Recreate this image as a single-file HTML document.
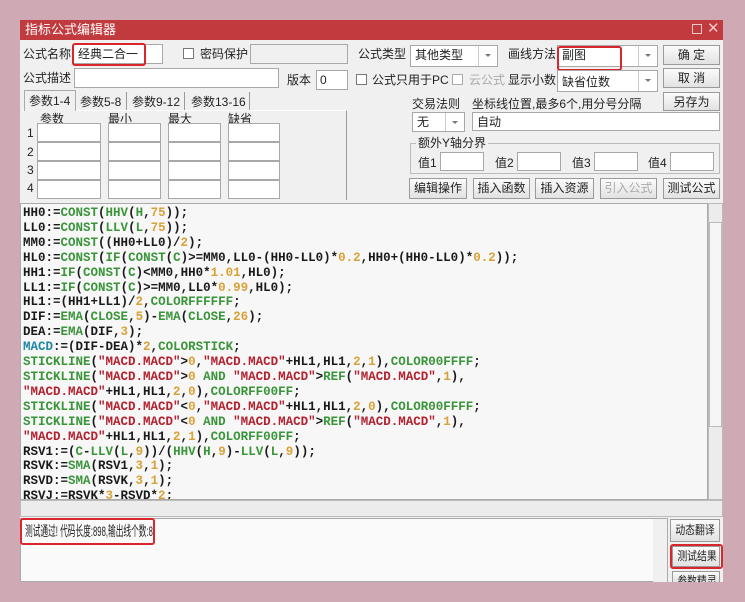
<!DOCTYPE html>
<html><head><meta charset="utf-8">
<style>
*{margin:0;padding:0;box-sizing:border-box}
body{width:745px;height:602px;background:#cfaab4;position:relative;overflow:hidden;font-family:"Liberation Sans","Noto Sans CJK SC",sans-serif;font-size:12px;color:#222}
.a{position:absolute}
.win{left:20px;top:20px;width:703px;height:562px;background:#f0f0f0}
.title{left:20px;top:20px;width:703px;height:20px;background:#c13a3d;color:#fff;font-size:13px;line-height:20px;padding-left:5px}
.l{position:absolute;white-space:nowrap;font-size:12px;line-height:14px}
.in{position:absolute;background:#fff;border:1px solid #a8a8a8}
.sel{position:absolute;background:#fff;border:1px solid #a8a8a8;font-size:12px;line-height:18px;padding-left:4px}
.sel:after{content:"";position:absolute;right:0;top:0;bottom:0;width:18px;border-left:1px solid #ccc;background:linear-gradient(#fff,#fff)}
.sel i{position:absolute;right:6px;top:8px;border:3px solid transparent;border-top:3px solid #777;z-index:2}
.btn{position:absolute;background:linear-gradient(#fbfbfb,#e2e2e2);border:1px solid #9a9a9a;font-size:12px;text-align:center;line-height:18px;white-space:nowrap;overflow:hidden}
.red{position:absolute;border:2px solid #d8262c;border-radius:3px}
.cb{position:absolute;width:11px;height:11px;border:1px solid #777;background:#fff}
.code{left:20px;top:203px;width:688px;height:297px;background:#f7f7f7;border:1px solid #aaa;overflow:hidden;font-family:"Liberation Mono",monospace;font-weight:bold;font-size:12.5px;line-height:14.9px;padding:2px 0 0 2px;white-space:pre;color:#1a1a1a}
.f{color:#3a953a}.n{color:#d9a237}.s{color:#b3202e}.m{color:#1f86a8}
.sq{display:inline-block;transform:scaleX(0.82);transform-origin:center}
</style></head><body>
<div class="a win"></div>
<div class="a title">指标公式编辑器</div>
<div class="a" style="left:692px;top:24px;width:10px;height:10px;border:1px solid #f3c8c8"></div>
<div class="a" style="left:707px;top:19px;color:#f3c8c8;font-size:15px">✕</div>

<div class="l" style="left:23px;top:47px">公式名称</div>
<div class="in" style="left:73px;top:44px;width:90px;height:20px"></div>
<div class="l" style="left:78px;top:47px">经典二合一</div>
<div class="red" style="left:72px;top:43px;width:74px;height:23px"></div>
<div class="cb" style="left:183px;top:48px"></div>
<div class="l" style="left:200px;top:47px">密码保护</div>
<div class="in" style="left:250px;top:44px;width:98px;height:20px;background:#f0f0f0"></div>
<div class="l" style="left:358px;top:47px">公式类型</div>
<div class="sel" style="left:410px;top:45px;width:88px;height:22px">其他类型<i></i></div>
<div class="l" style="left:508px;top:47px">画线方法</div>
<div class="sel" style="left:557px;top:45px;width:101px;height:22px">副图<i></i></div>
<div class="red" style="left:557px;top:46px;width:65px;height:25px"></div>
<div class="btn" style="left:663px;top:45px;width:57px;height:20px">确 定</div>

<div class="l" style="left:23px;top:71px">公式描述</div>
<div class="in" style="left:74px;top:68px;width:205px;height:20px"></div>
<div class="l" style="left:287px;top:73px">版本</div>
<div class="in" style="left:316px;top:70px;width:32px;height:20px"></div>
<div class="l" style="left:320px;top:73px">0</div>
<div class="cb" style="left:356px;top:74px"></div>
<div class="l" style="left:372px;top:73px">公式只用于PC</div>
<div class="cb" style="left:452px;top:74px;border-color:#aaa"></div>
<div class="l" style="left:469px;top:73px;color:#aaa">云公式</div>
<div class="l" style="left:508px;top:73px">显示小数</div>
<div class="sel" style="left:557px;top:70px;width:101px;height:22px;line-height:22px">缺省位数<i></i></div>
<div class="btn" style="left:663px;top:68px;width:57px;height:20px">取 消</div>

<div class="a" style="left:22px;top:110px;width:325px;height:90px;border-top:1px solid #fff;border-right:1px solid #999;background:#f0f0f0"></div>
<div class="a" style="left:24px;top:90px;width:52px;height:21px;background:#f0f0f0;border:1px solid #aaa;border-bottom:none"></div>
<div class="l" style="left:29px;top:94px">参数1-4</div>
<div class="l" style="left:80px;top:95px">参数5-8</div>
<div class="a" style="left:126px;top:92px;width:1px;height:18px;background:#999"></div>
<div class="l" style="left:132px;top:95px">参数9-12</div>
<div class="a" style="left:184px;top:92px;width:1px;height:18px;background:#999"></div>
<div class="l" style="left:191px;top:95px">参数13-16</div>
<div class="a" style="left:249px;top:92px;width:1px;height:18px;background:#999"></div>
<div class="l" style="left:40px;top:112px">参数</div>
<div class="l" style="left:108px;top:112px">最小</div>
<div class="l" style="left:168px;top:112px">最大</div>
<div class="l" style="left:228px;top:112px">缺省</div>
<div class="l" style="left:27px;top:126px">1</div>
<div class="l" style="left:27px;top:145px">2</div>
<div class="l" style="left:27px;top:163px">3</div>
<div class="l" style="left:27px;top:181px">4</div>
<div class="in" style="left:37px;top:123px;width:64px;height:19px"></div><div class="in" style="left:108px;top:123px;width:53px;height:19px"></div><div class="in" style="left:168px;top:123px;width:53px;height:19px"></div><div class="in" style="left:228px;top:123px;width:52px;height:19px"></div>
<div class="in" style="left:37px;top:142px;width:64px;height:19px"></div><div class="in" style="left:108px;top:142px;width:53px;height:19px"></div><div class="in" style="left:168px;top:142px;width:53px;height:19px"></div><div class="in" style="left:228px;top:142px;width:52px;height:19px"></div>
<div class="in" style="left:37px;top:161px;width:64px;height:19px"></div><div class="in" style="left:108px;top:161px;width:53px;height:19px"></div><div class="in" style="left:168px;top:161px;width:53px;height:19px"></div><div class="in" style="left:228px;top:161px;width:52px;height:19px"></div>
<div class="in" style="left:37px;top:180px;width:64px;height:19px"></div><div class="in" style="left:108px;top:180px;width:53px;height:19px"></div><div class="in" style="left:168px;top:180px;width:53px;height:19px"></div><div class="in" style="left:228px;top:180px;width:52px;height:19px"></div>

<div class="btn" style="left:663px;top:92px;width:57px;height:19px">另存为</div>
<div class="l" style="left:412px;top:97px">交易法则</div>
<div class="l" style="left:472px;top:97px">坐标线位置,最多6个,用分号分隔</div>
<div class="sel" style="left:412px;top:112px;width:53px;height:20px">无<i></i></div>
<div class="in" style="left:472px;top:112px;width:248px;height:19px"></div>
<div class="l" style="left:477px;top:115px">自动</div>
<div class="a" style="left:410px;top:143px;width:310px;height:31px;border:1px solid #bbb"></div>
<div class="l" style="left:416px;top:136px;background:#f0f0f0;padding:0 2px">额外Y轴分界</div>
<div class="l" style="left:418px;top:156px">值1</div><div class="in" style="left:440px;top:152px;width:44px;height:19px"></div>
<div class="l" style="left:495px;top:156px">值2</div><div class="in" style="left:517px;top:152px;width:44px;height:19px"></div>
<div class="l" style="left:572px;top:156px">值3</div><div class="in" style="left:594px;top:152px;width:44px;height:19px"></div>
<div class="l" style="left:648px;top:156px">值4</div><div class="in" style="left:670px;top:152px;width:44px;height:19px"></div>
<div class="btn" style="left:409px;top:178px;width:58px;height:21px;line-height:19px">编辑操作</div>
<div class="btn" style="left:473px;top:178px;width:57px;height:21px;line-height:19px">插入函数</div>
<div class="btn" style="left:535px;top:178px;width:59px;height:21px;line-height:19px">插入资源</div>
<div class="btn" style="left:600px;top:178px;width:57px;height:21px;line-height:19px;color:#aaa">引入公式</div>
<div class="btn" style="left:663px;top:178px;width:57px;height:21px;line-height:19px">测试公式</div>

<div class="a code">HH0:=<span class="f">CONST</span>(<span class="f">HHV</span>(<span class="f">H</span>,<span class="n">75</span>));
LL0:=<span class="f">CONST</span>(<span class="f">LLV</span>(<span class="f">L</span>,<span class="n">75</span>));
MM0:=<span class="f">CONST</span>((HH0+LL0)/<span class="n">2</span>);
HL0:=<span class="f">CONST</span>(<span class="f">IF</span>(<span class="f">CONST</span>(<span class="f">C</span>)&gt;=MM0,LL0-(HH0-LL0)*<span class="n">0.2</span>,HH0+(HH0-LL0)*<span class="n">0.2</span>));
HH1:=<span class="f">IF</span>(<span class="f">CONST</span>(<span class="f">C</span>)&lt;MM0,HH0*<span class="n">1.01</span>,HL0);
LL1:=<span class="f">IF</span>(<span class="f">CONST</span>(<span class="f">C</span>)&gt;=MM0,LL0*<span class="n">0.99</span>,HL0);
HL1:=(HH1+LL1)/<span class="n">2</span>,<span class="f">COLORFFFFFF</span>;
DIF:=<span class="f">EMA</span>(<span class="f">CLOSE</span>,<span class="n">5</span>)-<span class="f">EMA</span>(<span class="f">CLOSE</span>,<span class="n">26</span>);
DEA:=<span class="f">EMA</span>(DIF,<span class="n">3</span>);
<span class="m">MACD</span>:=(DIF-DEA)*<span class="n">2</span>,<span class="f">COLORSTICK</span>;
<span class="f">STICKLINE</span>(<span class="s">"MACD.MACD"</span>&gt;<span class="n">0</span>,<span class="s">"MACD.MACD"</span>+HL1,HL1,<span class="n">2</span>,<span class="n">1</span>),<span class="f">COLOR00FFFF</span>;
<span class="f">STICKLINE</span>(<span class="s">"MACD.MACD"</span>&gt;<span class="n">0</span> <span class="f">AND</span> <span class="s">"MACD.MACD"</span>&gt;<span class="f">REF</span>(<span class="s">"MACD.MACD"</span>,<span class="n">1</span>),
<span class="s">"MACD.MACD"</span>+HL1,HL1,<span class="n">2</span>,<span class="n">0</span>),<span class="f">COLORFF00FF</span>;
<span class="f">STICKLINE</span>(<span class="s">"MACD.MACD"</span>&lt;<span class="n">0</span>,<span class="s">"MACD.MACD"</span>+HL1,HL1,<span class="n">2</span>,<span class="n">0</span>),<span class="f">COLOR00FFFF</span>;
<span class="f">STICKLINE</span>(<span class="s">"MACD.MACD"</span>&lt;<span class="n">0</span> <span class="f">AND</span> <span class="s">"MACD.MACD"</span>&gt;<span class="f">REF</span>(<span class="s">"MACD.MACD"</span>,<span class="n">1</span>),
<span class="s">"MACD.MACD"</span>+HL1,HL1,<span class="n">2</span>,<span class="n">1</span>),<span class="f">COLORFF00FF</span>;
RSV1:=(<span class="f">C</span>-<span class="f">LLV</span>(<span class="f">L</span>,<span class="n">9</span>))/(<span class="f">HHV</span>(<span class="f">H</span>,<span class="n">9</span>)-<span class="f">LLV</span>(<span class="f">L</span>,<span class="n">9</span>));
RSVK:=<span class="f">SMA</span>(RSV1,<span class="n">3</span>,<span class="n">1</span>);
RSVD:=<span class="f">SMA</span>(RSVK,<span class="n">3</span>,<span class="n">1</span>);
RSVJ:=RSVK*<span class="n">3</span>-RSVD*<span class="n">2</span>;</div>
<div class="a" style="left:708px;top:203px;width:15px;height:297px;background:#ececec;border:1px solid #bbb"></div>
<div class="a" style="left:709px;top:222px;width:13px;height:205px;background:#f6f6f6;border:1px solid #bbb"></div>
<div class="a" style="left:20px;top:500px;width:703px;height:17px;background:#ececec;border:1px solid #bbb"></div>

<div class="a" style="left:20px;top:518px;width:648px;height:64px;background:#fafafa;border:1px solid #aaa"></div>
<div class="a" style="left:653px;top:519px;width:14px;height:63px;background:#f0f0f0"></div>
<div class="l" style="left:25px;top:523px;font-size:14px;line-height:16px;transform:scaleX(0.55);transform-origin:left">测试通过! 代码长度:898,输出线个数:8</div>
<div class="red" style="left:20px;top:518px;width:135px;height:27px"></div>
<div class="btn" style="left:670px;top:519px;width:50px;height:23px;line-height:21px"><span class="sq">动态翻译</span></div>
<div class="btn" style="left:672px;top:546px;width:48px;height:21px;line-height:19px"><span class="sq">测试结果</span></div>
<div class="red" style="left:670px;top:544px;width:53px;height:25px"></div>
<div class="btn" style="left:672px;top:571px;width:48px;height:11px;line-height:19px;border-bottom:none"><span class="sq">参数精灵</span></div>
</body></html>
